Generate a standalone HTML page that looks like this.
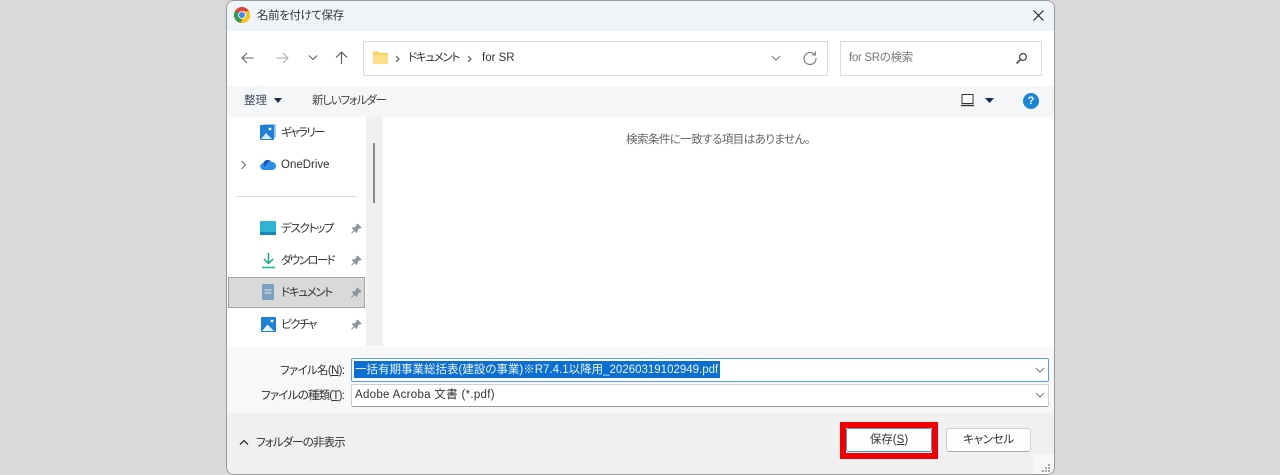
<!DOCTYPE html>
<html lang="ja"><head><meta charset="utf-8"><title>名前を付けて保存</title>
<style>
html,body{margin:0;padding:0;width:1280px;height:475px;overflow:hidden;background:#d9d9d9}
body{position:relative;font-family:"Liberation Sans","Noto Sans CJK JP",sans-serif;font-size:12px;color:#333;font-feature-settings:"palt"}
div,span,svg{position:absolute}
.t{white-space:nowrap;line-height:16px;font-size:11.5px}
u{text-decoration:underline}
#w{left:0;top:0;width:1280px;height:475px;filter:blur(.35px)}
</style></head><body><div id="w">
<div style="left:226px;top:0;width:829px;height:475px;background:#999;border-radius:8px"></div>
<div style="left:227px;top:1px;width:827px;height:473px;background:#f0f0f0;border-radius:7px;overflow:hidden">
 <div style="left:0;top:0;width:827px;height:30px;background:#eff4f9"></div>
 <div style="left:0;top:30px;width:827px;height:55px;background:#fff"></div>
 <div style="left:0;top:85px;width:827px;height:31px;background:#f5f6f8"></div>
 <div style="left:0;top:116px;width:827px;height:231px;background:#fff"></div>
 <div style="left:139px;top:116px;width:17px;height:229px;background:#f0f0f0"></div>
 <div style="left:0;top:346px;width:827px;height:66px;background:#f8f8f8"></div>
 <div style="left:0;top:412px;width:827px;height:61px;background:#f0f0f0"></div>
 <div style="left:806px;top:453px;width:21px;height:20px;background:#f8f8f8"></div>
</div>

<svg style="left:234px;top:7px" width="16" height="16" viewBox="0 0 16 16"><circle cx="8" cy="8" r="8" fill="#db4437"/><path d="M8 8L1.100 4A8 8 0 0 0 6.500 15.900z" fill="#2f9e50"/><path d="M8 4.200h7.300A8 8 0 0 1 6.500 15.900L10 8z" fill="#f5c518"/><circle cx="8" cy="8" r="3.900" fill="#fff"/><circle cx="8" cy="8" r="3" fill="#4285f4"/></svg>
<span class="t" style="left:257px;top:8px;letter-spacing:-.4px">名前を付けて保存</span>
<svg style="left:1032px;top:9px" width="13" height="13" viewBox="0 0 13 13"><path d="M1.500 1.500l10 10M11.500 1.500l-10 10" stroke="#222" stroke-width="1.100" fill="none"/></svg>

<svg style="left:240px;top:51px" width="15" height="14" viewBox="0 0 15 14"><path d="M13.500 7H2M7 2L2 7l5 5" stroke="#666" stroke-width="1.100" fill="none"/></svg>
<svg style="left:275px;top:51px" width="15" height="14" viewBox="0 0 15 14"><path d="M1.500 7H13M8 2l5 5-5 5" stroke="#aaa" stroke-width="1.100" fill="none"/></svg>
<svg style="left:308px;top:54px" width="10" height="7" viewBox="0 0 10 7"><path d="M1 1.500l4 4 4-4" stroke="#666" stroke-width="1.100" fill="none"/></svg>
<svg style="left:334px;top:50px" width="15" height="15" viewBox="0 0 15 15"><path d="M7.500 14V2M2 7.500L7.500 2 13 7.500" stroke="#555" stroke-width="1.100" fill="none"/></svg>

<div style="left:363px;top:41px;width:463px;height:33px;border:1px solid #dcdcdc;background:#fff"></div>
<svg style="left:373px;top:51px" width="15" height="13" viewBox="0 0 15 13"><path d="M0 1.500Q0 .5 1 .5h4l1.500 1.500H14q1 0 1 1V12q0 1-1 1H1q-1 0-1-1z" fill="#fbd15b"/><path d="M0 4h15v8q0 1-1 1H1q-1 0-1-1z" fill="#fde08a"/></svg>
<svg style="left:395px;top:55px" width="6" height="8" viewBox="0 0 6 8"><path d="M1 1l3 3-3 3" stroke="#555" stroke-width="1.100" fill="none"/></svg>
<span class="t" style="left:408px;top:50px;letter-spacing:-1.300px">ドキュメント</span>
<svg style="left:467px;top:55px" width="6" height="8" viewBox="0 0 6 8"><path d="M1 1l3 3-3 3" stroke="#555" stroke-width="1.100" fill="none"/></svg>
<span class="t" style="left:482px;top:50px">for SR</span>
<svg style="left:771px;top:55px" width="10" height="6" viewBox="0 0 10 6"><path d="M1 1l4 4 4-4" stroke="#777" fill="none"/></svg>
<svg style="left:803px;top:51px" width="14" height="14" viewBox="0 0 14 14"><path d="M11.500 3.500A6 6 0 1 0 13 7M12.500 .5v3.500H9" stroke="#777" stroke-width="1.100" fill="none"/></svg>

<div style="left:840px;top:41px;width:200px;height:33px;border:1px solid #dcdcdc;background:#fff"></div>
<span class="t" style="left:849px;top:50px;color:#777;letter-spacing:-.3px">for SRの検索</span>
<svg style="left:1015px;top:52px" width="13" height="13" viewBox="0 0 13 13"><circle cx="8" cy="5" r="3.400" stroke="#555" stroke-width="1.400" fill="none"/><path d="M5.500 7.500L1.500 11.500" stroke="#555" stroke-width="1.800"/></svg>

<span class="t" style="left:244px;top:93px;color:#3f4f60">整理</span>
<svg style="left:274px;top:98px" width="8" height="5" viewBox="0 0 8 5"><path d="M0 0h8L4 5z" fill="#1d2b45"/></svg>
<span class="t" style="left:312px;top:93px;color:#444;letter-spacing:-1.200px">新しいフォルダー</span>
<svg style="left:961px;top:94px" width="14" height="13" viewBox="0 0 14 13"><rect x="1" y=".5" width="11" height="9" fill="#fff" stroke="#333"/><path d="M0 11.500h13" stroke="#333" stroke-width="1.400"/></svg>
<svg style="left:985px;top:98px" width="9" height="5" viewBox="0 0 9 5"><path d="M0 0h9L4.500 5z" fill="#14254a"/></svg>
<div style="left:1023px;top:93px;width:16px;height:16px;border-radius:50%;background:#1a86d8;color:#fff;font-weight:bold;font-size:11px;line-height:16px;text-align:center">?</div>

<!-- sidebar -->
<svg style="left:260px;top:124px" width="16" height="16" viewBox="0 0 16 16"><rect x="3" y="0" width="13" height="14" rx="1" fill="#9cc6ee"/><rect x="0" y="1" width="14" height="15" rx="1" fill="#1f7fd6"/><path d="M1 15l5-6 6 6z" fill="#dbeafa"/><circle cx="10" cy="5" r="1.400" fill="#fff"/></svg>
<span class="t" style="left:281px;top:125px;letter-spacing:-1.600px">ギャラリー</span>
<svg style="left:240px;top:160px" width="7" height="10" viewBox="0 0 7 10"><path d="M1.500 1l4 4-4 4" stroke="#777" stroke-width="1.200" fill="none"/></svg>
<svg style="left:260px;top:159px" width="16" height="11" viewBox="0 0 16 11"><path d="M4 11a3.500 3.500 0 0 1-.5-7A4.500 4.500 0 0 1 11.500 3 4 4 0 0 1 12.500 11z" fill="#2a8fe8"/><path d="M3.500 4A4.500 4.500 0 0 1 10 1.500L4 8z" fill="#1a55c8"/></svg>
<span class="t" style="left:281px;top:157px">OneDrive</span>
<div style="left:236px;top:196px;width:121px;height:1px;background:#dedede"></div>
<div style="left:373px;top:143px;width:2px;height:60px;background:#8a8a8a"></div>
<svg style="left:260px;top:221px" width="16" height="14" viewBox="0 0 16 14"><rect width="16" height="14" rx="1" fill="#2fb4d6"/><rect y="11" width="16" height="3" fill="#1a87b5"/></svg>
<span class="t" style="left:281px;top:221px;letter-spacing:-1.300px">デスクトップ</span>
<svg style="left:262px;top:252px" width="13" height="17" viewBox="0 0 13 17"><path d="M6.500 1v10M2 7l4.500 4.500L11 7" stroke="#17a884" stroke-width="1.500" fill="none"/><path d="M0 15.500h13" stroke="#17b890" stroke-width="1.500"/></svg>
<span class="t" style="left:281px;top:253px;letter-spacing:-1.600px">ダウンロード</span>
<div style="left:228px;top:277px;width:135px;height:29px;background:#d9d9d9;border:1px solid #a3a3a3"></div>
<svg style="left:262px;top:284px" width="12" height="16" viewBox="0 0 12 16"><rect width="12" height="16" rx="1" fill="#7f9fc0"/><path d="M2.500 6h7M2.500 9h7" stroke="#dde6f0"/></svg>
<span class="t" style="left:281px;top:285px;letter-spacing:-1.300px">ドキュメント</span>
<svg style="left:261px;top:317px" width="15" height="15" viewBox="0 0 15 15"><rect width="15" height="15" rx="1" fill="#1f80d8"/><path d="M1 14l5.500-6.500L13 14z" fill="#e8f2fb"/><circle cx="11" cy="4" r="1.400" fill="#fff"/></svg>
<span class="t" style="left:281px;top:317px;letter-spacing:-1.500px">ピクチャ</span>
<svg style="left:351px;top:223px" width="11" height="11" viewBox="0 0 11 11"><path d="M6.500 .5l4 4-1 1-1-.2-2 2 .2 1.700-1 1-2-2L.7 10.800 0 10.300l2.800-3-2-2 1-1 1.700.2 2-2L5.300 1.500z" fill="#8a929a"/></svg>
<svg style="left:351px;top:255px" width="11" height="11" viewBox="0 0 11 11"><path d="M6.500 .5l4 4-1 1-1-.2-2 2 .2 1.700-1 1-2-2L.7 10.800 0 10.300l2.800-3-2-2 1-1 1.700.2 2-2L5.300 1.500z" fill="#8a929a"/></svg>
<svg style="left:351px;top:287px" width="11" height="11" viewBox="0 0 11 11"><path d="M6.500 .5l4 4-1 1-1-.2-2 2 .2 1.700-1 1-2-2L.7 10.800 0 10.300l2.800-3-2-2 1-1 1.700.2 2-2L5.300 1.500z" fill="#8a929a"/></svg>
<svg style="left:351px;top:319px" width="11" height="11" viewBox="0 0 11 11"><path d="M6.500 .5l4 4-1 1-1-.2-2 2 .2 1.700-1 1-2-2L.7 10.800 0 10.300l2.800-3-2-2 1-1 1.700.2 2-2L5.300 1.500z" fill="#8a929a"/></svg>

<span class="t" style="left:626px;top:132px;color:#666;letter-spacing:-.55px">検索条件に一致する項目はありません。</span>

<!-- fields -->
<span class="t" style="left:280px;top:363px;letter-spacing:-.7px">ファイル名(<u>N</u>):</span>
<div style="left:351px;top:358px;width:696px;height:22px;border:1px solid #5a9fdc;border-radius:2px;background:#fff"></div>
<div style="left:354px;top:361px;width:366px;height:17px;background:#0a6fd0"></div>
<span class="t" style="left:355px;top:362px;color:#eaf3fc">一括有期事業総括表(建設の事業)※R7.4.1以降用_20260319102949.pdf</span>
<svg style="left:1035px;top:367px" width="10" height="6" viewBox="0 0 10 6"><path d="M1 1l4 4 4-4" stroke="#777" fill="none"/></svg>
<span class="t" style="left:261px;top:388px;letter-spacing:-.8px">ファイルの種類(<u>T</u>):</span>
<div style="left:351px;top:384px;width:696px;height:21px;border:1px solid #cfcfcf;border-bottom-color:#9a9a9a;border-radius:2px;background:#fff"></div>
<span class="t" style="left:355px;top:387px;letter-spacing:.3px">Adobe Acroba 文書 (*.pdf)</span>
<svg style="left:1035px;top:392px" width="10" height="6" viewBox="0 0 10 6"><path d="M1 1l4 4 4-4" stroke="#777" fill="none"/></svg>

<svg style="left:239px;top:439px" width="10" height="7" viewBox="0 0 10 7"><path d="M1 5.500l4-4 4 4" stroke="#333" stroke-width="1.300" fill="none"/></svg>
<span class="t" style="left:256px;top:435px;letter-spacing:-.9px">フォルダーの非表示</span>

<div style="left:840px;top:422px;width:86px;height:25px;border:6px solid #f00000"></div>
<div class="t" style="left:846px;top:428px;width:84px;height:22px;border:1px solid #4a9ad8;border-radius:3px;background:#fdfdfd;text-align:center;line-height:22px">保存(<u>S</u>)</div>
<div class="t" style="left:946px;top:428px;width:83px;height:22px;border:1px solid #d0d0d0;border-bottom-color:#a8a8a8;border-radius:3px;background:#fdfdfd;text-align:center;line-height:22px;letter-spacing:-.3px">キャンセル</div>
<svg style="left:1041px;top:463px" width="10" height="10" viewBox="0 0 10 10"><g fill="#aaa"><rect x="7" y="1" width="2" height="2"/><rect x="4" y="4" width="2" height="2"/><rect x="7" y="4" width="2" height="2"/><rect x="1" y="7" width="2" height="2"/><rect x="4" y="7" width="2" height="2"/><rect x="7" y="7" width="2" height="2"/></g></svg>
</div></body></html>
